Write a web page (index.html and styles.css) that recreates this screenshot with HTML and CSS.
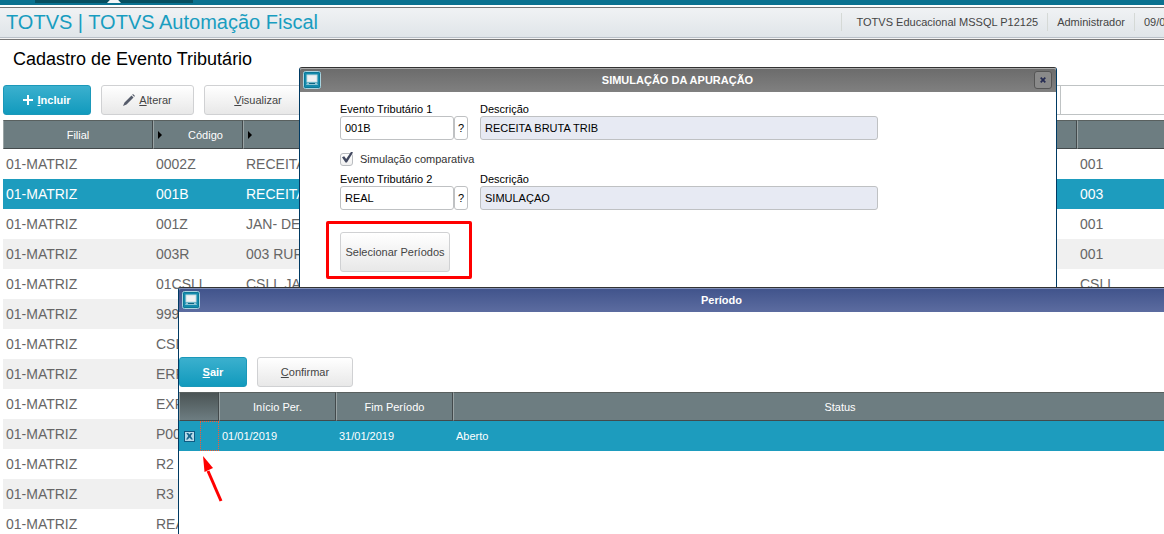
FILE: index.html
```html
<!DOCTYPE html>
<html lang="pt-BR">
<head>
<meta charset="utf-8">
<meta name="viewport" content="width=device-width, initial-scale=1">
<title>TOTVS Automação Fiscal</title>
<link rel="stylesheet" href="styles.css">
</head>
<body>
<svg class="sprite" aria-hidden="true">
  <symbol id="app-icon" viewBox="0 0 18 18">
    <rect x=".5" y=".5" width="17" height="17" rx="2" fill="#148bad" stroke="#a9d3df"/>
    <rect x="1.5" y="1.5" width="15" height="15" rx="1" fill="none" stroke="#0b7796"/>
    <rect x="4" y="4" width="10" height="7" fill="#eef1f2" stroke="#c3dbe2"/>
    <path d="M3 14l1-2h10l1 2z" fill="#8ec5d5"/>
    <path d="M6 12.500h6" stroke="#0b6683"/>
  </symbol>
</svg>
<div class="app">
  <div class="tabstrip"><div class="tab"></div></div>
  <header class="header">
    <div class="brand">TOTVS | TOTVS Automação Fiscal</div>
    <div class="session">
      <span class="session-item environment">TOTVS Educacional MSSQL P12125</span>
      <span class="session-item">Administrador</span>
      <span class="session-item session-date">09/0</span>
    </div>
  </header>
  <main class="main">
    <h1 class="title">Cadastro de Evento Tributário</h1>
    <div class="toolbar">
      <button class="btn btn-primary" type="button"><svg class="plus" viewBox="0 0 10 10"><path d="M5 0v10M0 5h10" stroke="#fff" stroke-width="2"/></svg><span><u>I</u>ncluir</span></button>
      <button class="btn btn-edit" type="button"><svg class="pencil" viewBox="0 0 12 12"><path d="M0 12l1.500-3.500L8.500 1.500l2 2L3.500 10.500zM9.200.8L10 0l2 2-.8.8z" fill="#555b6a"/></svg><span><u>A</u>lterar</span></button>
      <button class="btn btn-view" type="button"><span><u>V</u>isualizar</span></button>
      <input class="search-by" type="text" aria-label="Pesquisar por">
      <input class="search" type="text" aria-label="Pesquisar">
    </div>
    <table class="grid events">
      <colgroup><col class="col-branch"><col class="col-code"><col><col class="col-last"></colgroup>
      <thead><tr><th>Filial</th><th class="sortable indented">Código</th><th class="sortable"></th><th></th></tr></thead>
      <tbody>
        <tr><td>01-MATRIZ</td><td>0002Z</td><td>RECEITA</td><td>001</td></tr>
        <tr class="selected"><td>01-MATRIZ</td><td>001B</td><td>RECEITA</td><td>003</td></tr>
        <tr><td>01-MATRIZ</td><td>001Z</td><td>JAN- DEZ</td><td>001</td></tr>
        <tr><td>01-MATRIZ</td><td>003R</td><td>003 RURAL</td><td>001</td></tr>
        <tr><td>01-MATRIZ</td><td>01CSLL</td><td>CSLL JAN</td><td>CSLL</td></tr>
        <tr><td>01-MATRIZ</td><td>999</td><td></td><td></td></tr>
        <tr><td>01-MATRIZ</td><td>CSL</td><td></td><td></td></tr>
        <tr><td>01-MATRIZ</td><td>ERR</td><td></td><td></td></tr>
        <tr><td>01-MATRIZ</td><td>EXP</td><td></td><td></td></tr>
        <tr><td>01-MATRIZ</td><td>P00</td><td></td><td></td></tr>
        <tr><td>01-MATRIZ</td><td>R2</td><td></td><td></td></tr>
        <tr><td>01-MATRIZ</td><td>R3</td><td></td><td></td></tr>
        <tr><td>01-MATRIZ</td><td>REA</td><td></td><td></td></tr>
      </tbody>
    </table>
  </main>

  <section class="window simulation" role="dialog" aria-labelledby="sim-title">
    <div class="titlebar titlebar-gray">
      <svg class="app-icon"><use href="#app-icon"/></svg>
      <h2 class="window-title" id="sim-title">SIMULAÇÃO DA APURAÇÃO</h2>
      <button class="close" type="button" aria-label="Fechar"><svg viewBox="0 0 6 6"><path d="M.7.7l4.600 4.600M5.300.7L.7 5.300" stroke="#252b52" stroke-width="1.700"/></svg></button>
    </div>
    <form class="form">
      <div class="form-row">
        <div class="field">
          <label for="ev1">Evento Tributário 1</label>
          <div class="lookup"><input class="input" id="ev1" type="text" value="001B"><button class="lookup-btn" type="button">?</button></div>
        </div>
        <div class="field description">
          <label for="de1">Descrição</label>
          <input class="input readonly" id="de1" type="text" value="RECEITA BRUTA TRIB" readonly>
        </div>
      </div>
      <label class="check"><input class="checkbox" type="checkbox" checked>Simulação comparativa</label>
      <div class="form-row">
        <div class="field">
          <label for="ev2">Evento Tributário 2</label>
          <div class="lookup"><input class="input" id="ev2" type="text" value="REAL"><button class="lookup-btn" type="button">?</button></div>
        </div>
        <div class="field description">
          <label for="de2">Descrição</label>
          <input class="input readonly" id="de2" type="text" value="SIMULAÇAO" readonly>
        </div>
      </div>
      <div class="highlight"><button class="btn btn-periods" type="button">Selecionar Períodos</button></div>
    </form>
  </section>

  <section class="window period" role="dialog" aria-labelledby="per-title">
    <div class="titlebar titlebar-blue">
      <svg class="app-icon"><use href="#app-icon"/></svg>
      <h2 class="window-title" id="per-title">Período</h2>
    </div>
    <div class="period-toolbar">
      <button class="btn btn-primary btn-exit" type="button"><span><u>S</u>air</span></button>
      <button class="btn btn-confirm" type="button"><span><u>C</u>onfirmar</span></button>
    </div>
    <table class="grid periods">
      <colgroup><col class="col-mark"><col class="col-flag"><col class="col-date"><col class="col-date"><col></colgroup>
      <thead><tr><th class="mark-head" colspan="2"></th><th>Início Per.</th><th>Fim Período</th><th>Status</th></tr></thead>
      <tbody><tr class="selected">
        <td class="mark"><input class="markbox" type="checkbox" aria-label="Marcar período" checked></td>
        <td class="focus-cell"></td><td>01/01/2019</td><td>31/01/2019</td><td>Aberto</td>
      </tr></tbody>
    </table>
    <svg class="arrow" viewBox="0 0 22 48" aria-hidden="true"><path d="M20 45L7 15" stroke="#f00" stroke-width="3"/><path d="M2 0l10 12-8.500 4z" fill="#f00"/></svg>
  </section>
</div>
</body>
</html>
```
FILE: styles.css
```css
* { box-sizing: border-box; }
body {
  margin: 0;
  background: #fff;
  color: #000;
  font: 11px/14px "Liberation Sans", Arial, sans-serif;
}
button, input { font: inherit; color: inherit; margin: 0; }
.sprite { display: none; }
.app { position: relative; height: 100vh; overflow: hidden; }

.tabstrip { height: 5px; background: #0b7290; padding-left: 35px; }
.tab { width: 158px; height: 3px; background: #074f60; }
.tab::after {
  content: "";
  display: block;
  width: 14px;
  height: 3px;
  margin-left: 72px;
  float: left;
  background: #f4f6f7;
  clip-path: polygon(20% 0, 80% 0, 100% 100%, 0 100%);
}
.header {
  display: flex;
  justify-content: space-between;
  height: 31px;
  margin: 2px 0 1px;
  border-top: 1px solid #777;
  border-bottom: 1px solid #b9c0c8;
  background: linear-gradient(#f0f2f4, #e0e5e9);
  box-shadow: 0 1px #f4f4f4, 0 2px #777;
}
.brand { padding-left: 6px; font-size: 20px; line-height: 28px; color: #189dc0; white-space: nowrap; }
.session { display: flex; padding-top: 5px; color: #444; white-space: nowrap; }
.session-item { height: 18px; border-left: 1px solid #d5d9d6; padding: 2px 9px; }
.environment { padding-left: 15px; }
.session-date { width: 31px; padding-right: 0; }
.session { margin-right: -1px; }

.main { padding-left: 3px; }
.title { margin: 0; padding: 8px 0 0 10px; font-size: 18px; line-height: 24px; font-weight: 400; }
.toolbar { display: flex; gap: 10px; padding: 14px 0 5px; }
.btn {
  display: flex;
  align-items: center;
  justify-content: center;
  gap: 4px;
  height: 30px;
  padding: 0;
  border: 1px solid #d0d1d3;
  border-radius: 3px;
  background: linear-gradient(#fff, #e8e8e8);
  color: #444;
  white-space: nowrap;
}
.btn-primary {
  width: 88px;
  border-color: #1b98b9;
  background: linear-gradient(#3bb0ce, #119abd);
  color: #fff;
  font-weight: 700;
}
.plus { width: 10px; height: 10px; }
.pencil { width: 12px; height: 12px; }
.btn-edit { width: 93px; }
.btn-view { width: 108px; }
.search-by, .search { min-width: 0; height: 30px; padding: 0 4px; border: 1px solid #bfc3c4; background: #fff; }
.search-by { flex: 1; border-color: #bfc3c4; }
.search { width: 108px; margin: 0 -4px 0 -11px; }

.grid { width: 100%; border-collapse: separate; border-spacing: 0; table-layout: fixed; }
.grid th {
  position: relative;
  height: 29px;
  padding: 0;
  border: 1px solid #434a4c;
  border-top-color: #59605f;
  border-left-color: #9aa4a5;
  background: #6d7d81;
  color: #fff;
  font-weight: 400;
}
.grid th:last-child { border-right: 0; }
.grid td { height: 30px; padding: 0 0 0 3px; overflow: hidden; white-space: nowrap; }
.grid .selected td { background: #1d9cbe; color: #fff; }
.events td { font-size: 14px; line-height: 16px; color: #666; }
.events tbody tr:nth-child(even) { background: #f0f0f0; }
.col-branch { width: 150px; }
.col-code { width: 90px; }
.col-last { width: 87px; }
.grid .indented { padding-left: 15px; }
.sortable::before {
  content: "";
  position: absolute;
  left: 4px;
  top: 10px;
  border: 4px solid transparent;
  border-left-color: #000;
  border-right-width: 0;
}

.window { position: absolute; background: #fff; border: 1px solid #003a63; border-top-color: #333; border-bottom: 0; border-radius: 3px 3px 0 0; }
.simulation { left: 299px; right: 107px; top: 67px; bottom: 0; }
.period { left: 178px; right: -102px; top: 287px; bottom: 0; }
.titlebar {
  display: grid;
  grid-template-columns: 18px 1fr 18px;
  align-items: center;
  height: 24px;
  padding: 0 4px 0 3px;
  border-radius: 2px 2px 0 0;
  color: #fff;
}
.titlebar-gray { background: linear-gradient(#6b6b6b, #808080); box-shadow: inset 0 1px #aaa; }
.titlebar-blue { background: linear-gradient(#40538b, #5c6ca0); box-shadow: inset 0 1px #8290b8; }
.app-icon { width: 18px; height: 18px; }
.window-title { margin: 0; font-size: 11px; line-height: 14px; text-align: center; }
.close {
  display: flex;
  align-items: center;
  justify-content: center;
  width: 18px;
  height: 18px;
  padding: 0;
  border: 1px solid #555;
  border-radius: 3px;
  background: #8a8a8a;
}
.close svg { width: 6px; height: 6px; }

.form { padding: 10px 40px 0; }
.form-row { display: flex; gap: 12px; }
.field { width: 128px; }
.field label { display: block; line-height: 14px; }
.description { width: 398px; }
.lookup { display: flex; }
.input {
  width: 100%;
  min-width: 0;
  height: 24px;
  padding: 0 4px;
  border: 1px solid #bfc1c3;
  border-radius: 3px;
  background: #fff;
  outline: 0;
}
.readonly { background: #e7eaf3; }
.lookup-btn {
  flex: none;
  width: 14px;
  height: 24px;
  padding: 0;
  border: 1px solid #bfc1c3;
  border-radius: 3px;
  background: #fff;
}
.check { display: flex; align-items: center; gap: 7px; height: 14px; margin: 12px 0 6px; color: #333; }
.checkbox {
  position: relative;
  appearance: none;
  width: 13px;
  height: 13px;
  border: 1px solid #b9bcc0;
  border-radius: 3px;
  background: linear-gradient(#fff, #f0f0f0);
}
.checkbox:checked::before {
  content: "";
  position: absolute;
  left: 1px;
  top: -2px;
  width: 11px;
  height: 11px;
  background: #434a61;
  clip-path: polygon(0 52%, 20% 44%, 38% 68%, 84% 0, 100% 10%, 45% 100%, 32% 100%);
}
.highlight {
  width: 146px;
  height: 58px;
  margin: 11px 0 0 -14px;
  padding: 8px 11px;
  border: 3px solid #f00;
  border-radius: 2px;
}
.btn-periods { width: 110px; height: 40px; }

.period-toolbar { display: flex; gap: 10px; padding: 45px 0 5px; }
.btn-exit { width: 68px; }
.btn-confirm { width: 96px; }
.grid.periods { width: calc(100% - 39px); }
.col-mark { width: 21px; }
.col-flag { width: 19px; }
.col-date { width: 117px; }
.periods .mark-head { background: linear-gradient(#4b5455, #6d7d81); }
.periods .mark { padding: 0 0 0 5px; }
.grid .focus-cell { border: 1px dotted #ff5a2c; }
.markbox {
  display: block;
  position: relative;
  appearance: none;
  width: 11px;
  height: 11px;
  border: 1px solid #0e5b83;
  background: #b7d9e8;
}
.markbox:checked::before {
  content: "";
  position: absolute;
  inset: 1px;
  background: #17658c;
  clip-path: polygon(0 0, 25% 0, 50% 30%, 75% 0, 100% 0, 68% 50%, 100% 100%, 75% 100%, 50% 70%, 25% 100%, 0 100%, 32% 50%);
}
.arrow { position: absolute; left: 22px; top: 168px; width: 22px; height: 48px; }
```
